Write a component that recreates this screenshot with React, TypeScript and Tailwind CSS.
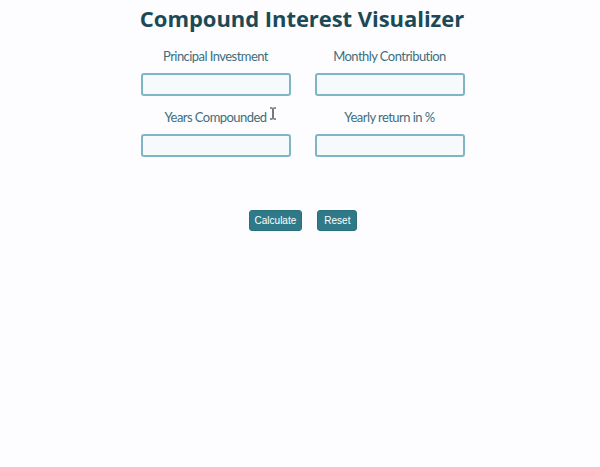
import React from "react";

function Field({ label }: { label: string }) {
  return (
    <div className="flex flex-col items-center w-[150px]">
      <label className="text-[13px] leading-[18px] tracking-[-0.55px] text-[#3d6f7c] h-[18px] whitespace-nowrap" style={{ fontFamily: 'Lato, "Open Sans", sans-serif' }}>{label}</label>
      <input className="mt-[8px] w-[150px] h-[23px] rounded-[3px] border-2 border-[#7fb5c4] bg-[#f7fafd] outline-none" />
    </div>
  );
}

export default function App() {
  return (
    <div className="min-h-[467px] w-full bg-[#fdfcff] flex flex-col items-center" style={{ fontFamily: '"Open Sans", "Noto Sans", sans-serif' }}>
      <h1 className="mt-[2px] text-[22px] leading-[32px] font-bold text-[#1b4a56] pl-[4px] tracking-[-0.05px]">Compound Interest Visualizer</h1>
      <div className="mt-[13px] pl-[5px] grid grid-cols-[150px_150px] gap-x-[24px] gap-y-[12px] relative">
        <Field label="Principal Investment" />
        <Field label="Monthly Contribution" />
        <Field label="Years Compounded" />
        <Field label="Yearly return in %" />
        <svg className="absolute left-[133px] top-[60px]" width="8" height="13" viewBox="0 0 8 13">
          <path d="M1 1h2.5M4.5 1H7M4 1.5v10M1 12h2.5M4.5 12H7" stroke="#222" strokeWidth="1.2" fill="none" />
        </svg>
      </div>
      <div className="mt-[53px] pl-[6px] flex gap-[15px]" style={{ fontFamily: '"Liberation Sans", Arial, sans-serif' }}>
        <button className="h-[21px] px-[5px] rounded-[3px] bg-[#2f7a89] text-white text-[10px] border border-[#2a6f7d]">Calculate</button>
        <button className="h-[21px] px-[6px] rounded-[3px] bg-[#2f7a89] text-white text-[10px] border border-[#2a6f7d]">Reset</button>
      </div>
    </div>
  );
}
